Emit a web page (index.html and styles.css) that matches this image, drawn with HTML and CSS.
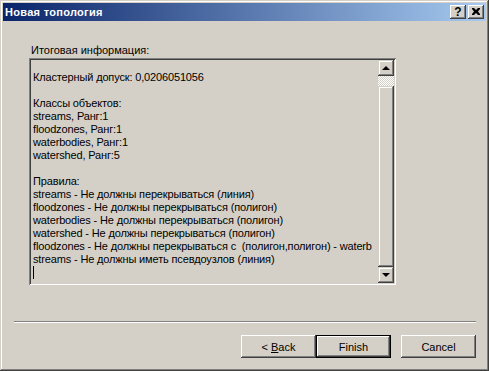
FILE: index.html
```html
<!DOCTYPE html>
<html lang="ru">
<head>
	<meta charset="UTF-8">
	<title>Новая топология</title>
	<link rel="stylesheet" href="styles.css">
</head>
<body>
	<div class="ventana">
		<div class="titulo">
			<span class="textoTitulo">Новая топология</span>
			<div class="botonesTitulo">
				<button class="btnTitulo ayuda">?</button>
				<button class="btnTitulo cerrar">
					<svg width="8" height="7" viewBox="0 0 8 7"><path d="M0 0h2l2 2 2-2h2v1l-2 2.5 2 2.5v1h-2l-2-2-2 2h-2v-1l2-2.5-2-2.5z" fill="#000"/></svg>
				</button>
			</div>
		</div>
		<div class="contenido">
			<div class="etiqueta">Итоговая информация:</div>
			<div class="caja">
				<div class="texto">Кластерный допуск: 0,0206051056

Классы объектов:
streams, Ранг:1
floodzones, Ранг:1
waterbodies, Ранг:1
watershed, Ранг:5

Правила:
streams - Не должны перекрываться (линия)
floodzones - Не должны перекрываться (полигон)
waterbodies - Не должны перекрываться (полигон)
watershed - Не должны перекрываться (полигон)
floodzones - Не должны перекрываться с  (полигон,полигон) - waterb
streams - Не должны иметь псевдоузлов (линия)
<span class="cursor"></span></div>
				<div class="scroll">
					<div class="flecha"><span class="triArriba"></span></div>
					<div class="pista"></div>
					<div class="pulgar"></div>
					<div class="flecha"><span class="triAbajo"></span></div>
				</div>
			</div>
		</div>
		<div class="separador"></div>
		<div class="opciones">
			<button class="btn">&lt; <u>B</u>ack</button>
			<button class="btn defecto">Finish</button>
			<button class="btn cancelar">Cancel</button>
		</div>
	</div>
</body>
</html>
```

FILE: styles.css
```css
*{
	margin:0;
	padding:0;
	box-sizing: border-box;
}
body{
	font-family: "Liberation Sans", Arial, sans-serif;
	font-size: 11px;
	background: #d4d0c8;
	color: #000;
}
.ventana{
	width: 489px;
	height: 371px;
	padding: 3px;
	display: flex;
	flex-direction: column;
	background: #d4d0c8;
	box-shadow: inset -1px -1px #404040, inset 1px 1px #d4d0c8, inset -2px -2px #808080, inset 2px 2px #fff;
}
.titulo{
	height: 18px;
	display: flex;
	align-items: center;
	justify-content: space-between;
	background: linear-gradient(to right, #0a246a, #a6caf0);
	padding: 0 2px 0 2px;
}
.textoTitulo{
	color: #fff;
	font-weight: bold;
	font-size: 11px;
	letter-spacing: 0.3px;
}
.botonesTitulo{
	display: flex;
	gap: 2px;
}
.btnTitulo{
	width: 16px;
	height: 14px;
	border: none;
	background: #d4d0c8;
	box-shadow: inset -1px -1px #404040, inset 1px 1px #fff, inset -2px -2px #808080, inset 2px 2px #d4d0c8;
	display: flex;
	align-items: center;
	justify-content: center;
	font-family: "Liberation Sans", Arial, sans-serif;
	font-weight: bold;
	font-size: 12px;
	line-height: 1;
	padding-bottom: 1px;
}
.contenido{
	flex: 1;
	padding: 23px 0 0 26px;
}
.etiqueta{
	line-height: 13px;
	padding-left: 2px;
	margin-bottom: 1px;
}
.caja{
	width: 367px;
	height: 227px;
	display: flex;
	padding: 2px;
	background: #d4d0c8;
	box-shadow: inset 1px 1px #808080, inset -1px -1px #fff, inset 2px 2px #404040, inset -2px -2px #d4d0c8;
}
.texto{
	flex: 1;
	overflow: hidden;
	white-space: pre;
	line-height: 13px;
	letter-spacing: -0.15px;
	padding: 11px 0 0 2px;
}
.cursor{
	display: inline-block;
	width: 1px;
	height: 13px;
	background: #000;
	vertical-align: top;
}
.scroll{
	width: 16px;
	display: flex;
	flex-direction: column;
}
.flecha, .pulgar{
	background: #d4d0c8;
	box-shadow: inset -1px -1px #404040, inset 1px 1px #d4d0c8, inset -2px -2px #808080, inset 2px 2px #fff;
}
.flecha{
	height: 16px;
	display: flex;
	align-items: center;
	justify-content: center;
}
.pista{
	height: 10px;
	background: repeating-conic-gradient(#fff 0 25%, #d4d0c8 0 50%) 0 0 / 2px 2px;
}
.pulgar{
	flex: 1;
}
.triArriba, .triAbajo{
	width: 0;
	height: 0;
	border-left: 4px solid transparent;
	border-right: 4px solid transparent;
}
.triArriba{
	border-bottom: 4px solid #000;
}
.triAbajo{
	border-top: 4px solid #000;
}
.separador{
	margin: 0 10px 0 11px;
	height: 2px;
	border-top: 1px solid #808080;
	border-bottom: 1px solid #fff;
}
.opciones{
	display: flex;
	justify-content: flex-end;
	padding: 12px 10px 10px 0;
}
.btn{
	width: 75px;
	height: 23px;
	border: none;
	background: #d4d0c8;
	font-family: "Liberation Sans", Arial, sans-serif;
	font-size: 11px;
	color: #000;
	box-shadow: inset -1px -1px #404040, inset 1px 1px #fff, inset -2px -2px #808080, inset 2px 2px #d4d0c8;
}
.defecto{
	border: 1px solid #000;
	box-shadow: inset -1px -1px #404040, inset 1px 1px #fff, inset -2px -2px #808080, inset 2px 2px #d4d0c8;
}
.cancelar{
	margin-left: 10px;
}
```
